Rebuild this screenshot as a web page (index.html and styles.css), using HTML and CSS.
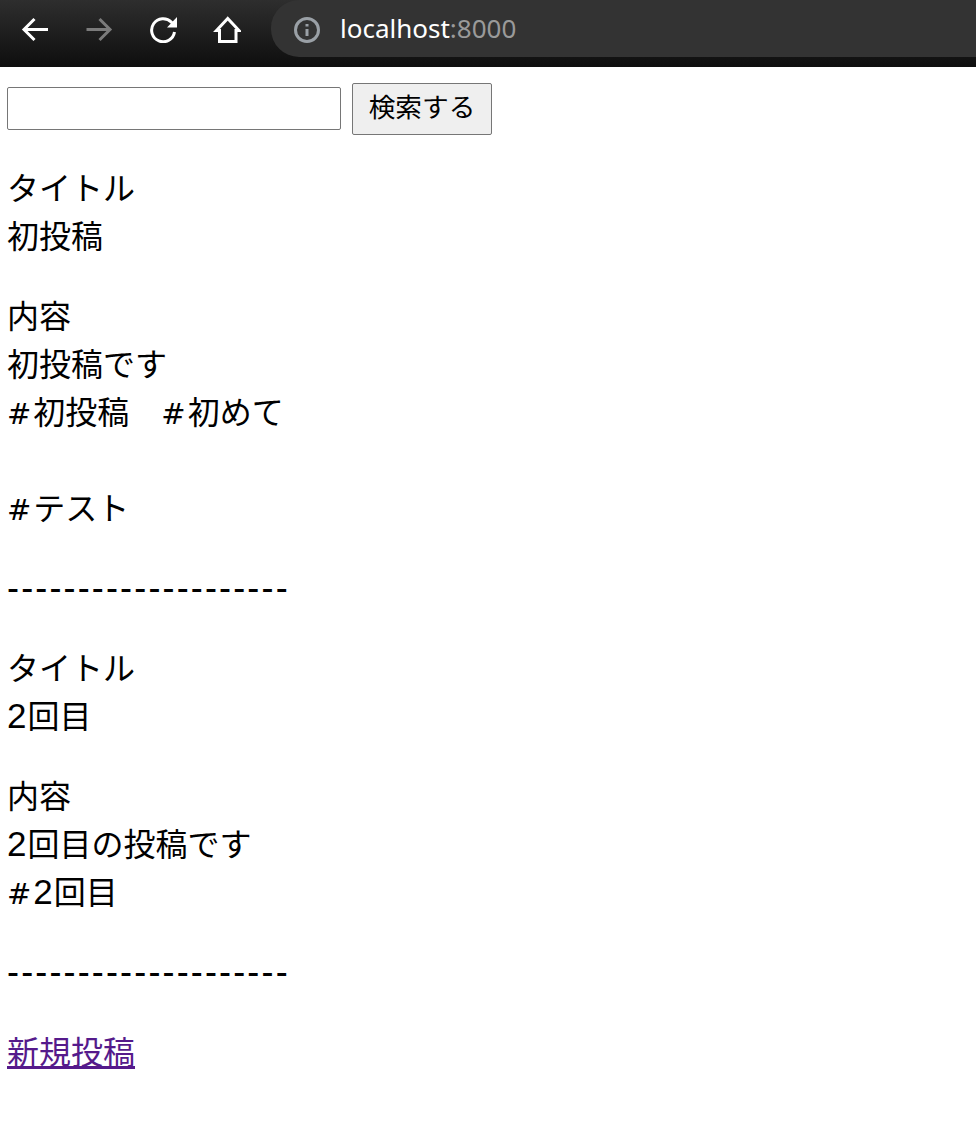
FILE: index.html
```html
<!DOCTYPE html>
<html lang="ja">
<head>
<meta charset="utf-8">
<title>localhost:8000</title>
<link rel="stylesheet" href="styles.css">
</head>
<body>
<header class="toolbar">
  <svg class="icon back" viewBox="0 0 28 28"><path d="M27 14.500H3M13.500 4 3 14.500 13.500 25"/></svg>
  <svg class="icon forward" viewBox="0 0 28 28"><path d="M1.500 14.500H25M14.500 4 25 14.500 14.500 25"/></svg>
  <svg class="icon reload" viewBox="0 0 28 28"><path d="M25.500 17A11.500 11.500 0 1 1 22.500 7.300L25 10"/><path class="solid" d="M28 2V12.500H18Z"/></svg>
  <svg class="icon home" viewBox="0 0 28 28"><path d="M14.700 3.500 3.500 15.500H6.500V26.500H23V15.500H26Z"/></svg>
  <div class="omnibox">
    <svg class="info" viewBox="0 0 26 26"><circle cx="13" cy="13" r="11.500"/><path d="M13 12v7M13 7v2.500"/></svg>
    <span class="url">localhost<span class="port">:8000</span></span>
  </div>
</header>
<main class="page">
  <form class="search">
    <input class="search-input" type="text">
    <button class="search-button" type="button">検索する</button>
  </form>
  <p>タイトル<br>初投稿</p>
  <p>内容<br>初投稿です<br><span class="hash">#</span>初投稿　<span class="hash">#</span>初めて<br><br><span class="hash">#</span>テスト</p>
  <p class="sep">--------------------</p>
  <p>タイトル<br><span class="num">2</span>回目</p>
  <p>内容<br><span class="num">2</span>回目の投稿です<br><span class="hash">#</span><span class="num">2</span>回目</p>
  <p class="sep">--------------------</p>
  <p><a class="new" href="#">新規投稿</a></p>
</main>
</body>
</html>
```
FILE: styles.css
```css
html, body {
  margin: 0;
  padding: 0;
  background: #fff;
}
body {
  font-family: "Noto Sans CJK JP", "Noto Sans", sans-serif;
  font-size: 32px;
  line-height: 48px;
  color: #000;
  overflow: hidden;
}
.toolbar {
  height: 67px;
  display: flex;
  align-items: flex-start;
  gap: 36px;
  padding-left: 21px;
  background: linear-gradient(#2e2e2e, #0e0e0e);
  overflow: hidden;
}
.icon {
  width: 28px;
  height: 28px;
  margin-top: 15px;
  flex: none;
  fill: none;
  stroke: #fff;
  stroke-width: 3;
}
.forward { stroke: #7b7b7b; }
.reload .solid { fill: #fff; stroke: none; }
.omnibox {
  margin-left: -6px;
  flex: 1;
  height: 57px;
  background: #333;
  border-radius: 28px 0 0 28px;
  display: flex;
  align-items: center;
  padding-left: 23px;
}
.info {
  width: 26px;
  height: 26px;
  margin-top: 2px;
  flex: none;
  fill: none;
  stroke: #9aa0a6;
  stroke-width: 3;
}
.url {
  margin-left: 20px;
  font-family: "Noto Sans", sans-serif;
  font-size: 26px;
  line-height: 57px;
  color: #fff;
}
.port { color: #9a9a9a; }
.page { padding: 16px 8px 0 7px; }
.search {
  display: flex;
  align-items: center;
  gap: 11px;
  height: 52px;
  margin: 0;
}
.search-input {
  box-sizing: border-box;
  width: 334px;
  height: 43px;
  margin: 0 0 2px;
  padding: 0 3px;
  border: 1px solid #767676;
  border-radius: 2px;
  background: #fff;
}
.search-button {
  box-sizing: border-box;
  width: 140px;
  height: 52px;
  margin: 0;
  padding: 0 0 7px;
  border: 1px solid #767676;
  border-radius: 2px;
  background: #efefef;
  color: #000;
  font-family: inherit;
  font-size: 26.667px;
  line-height: 42px;
}
p {
  margin: 32px 0;
}
.search + p { margin-top: 27px; }
.hash {
  font-family: "DejaVu Sans", sans-serif;
  font-size: 29px;
  line-height: 1;
  letter-spacing: 2px;
}
.num {
  font-family: "Liberation Sans", sans-serif;
  font-size: 35px;
  line-height: 1;
  letter-spacing: 1px;
}
.sep {
  height: 46px;
  padding-top: 2px;
  font-family: "Liberation Sans", sans-serif;
  font-size: 36px;
  letter-spacing: 2.150px;
}
.new { color: #551a8b; text-decoration: underline; }
```
